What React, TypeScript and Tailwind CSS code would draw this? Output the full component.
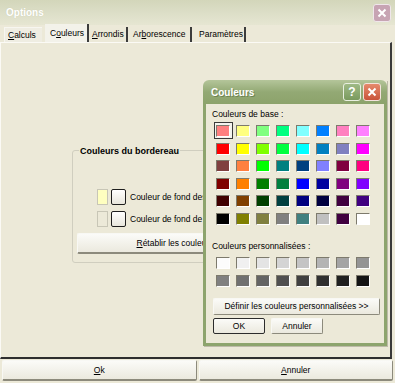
import React from 'react';

const base: string[][] = [
  ['#ff8080', '#ffff80', '#80ff80', '#00ff80', '#80ffff', '#0080ff', '#ff80c0', '#ff80ff'],
  ['#ff0000', '#ffff00', '#80ff00', '#00ff40', '#00ffff', '#0080c0', '#8080c0', '#ff00ff'],
  ['#804040', '#ff8040', '#00ff00', '#008080', '#004080', '#8080ff', '#800040', '#ff0080'],
  ['#800000', '#ff8000', '#008000', '#008040', '#0000ff', '#0000a0', '#800080', '#8000ff'],
  ['#400000', '#804000', '#004000', '#004040', '#000080', '#000040', '#400040', '#400080'],
  ['#000000', '#808000', '#808040', '#808080', '#408080', '#c0c0c0', '#400040', '#ffffff'],
];

const custom: string[] = [
  '#fcfcfc', '#f0f0f0', '#e4e4e4', '#d4d4d4', '#c4c4c4', '#b4b4b4', '#a4a4a4', '#949494',
  '#808080', '#707070', '#646464', '#505050', '#404040', '#303030', '#202020', '#141414',
];

function Swatch({ color, selected }: { color: string; selected?: boolean }) {
  return (
    <div className="relative w-[14px] h-[12px]">
      {selected && (
        <div className="absolute -left-[2px] -top-[3px] w-[19px] h-[17px] border border-[#3a3a3a] bg-[#f4f3ee]" />
      )}
      <div
        className="relative w-[14px] h-[12px] border border-t-[#7d7a6c] border-l-[#7d7a6c] border-b-white border-r-white"
        style={{ backgroundColor: color }}
      />
    </div>
  );
}

function XpButton({ children, className = '', isDefault = false }: { children: React.ReactNode; className?: string; isDefault?: boolean }) {
  return (
    <div
      className={`flex items-center justify-center bg-gradient-to-b from-[#fbfbf8] to-[#ebe9de] border ${
        isDefault
          ? 'border-[#2c2c2c]'
          : 'border-t-[#f8f8f4] border-l-[#f8f8f4] border-b-[#8c8a7c] border-r-[#8c8a7c]'
      } rounded-[2px] ${className}`}
    >
      {children}
    </div>
  );
}

export default function App() {
  return (
    <div className="relative w-[395px] h-[383px] bg-[#ece9d8] flex flex-col overflow-hidden font-['Liberation_Sans',Arial,sans-serif] text-[8.5px] text-black leading-[11px]">
      {/* title bar */}
      <div className="h-[25px] flex items-center justify-between pl-[6px] pr-[4px] bg-gradient-to-b from-[#d3d6ba] via-[#dcdec7] to-[#e6e6d2]">
        <span className="text-white font-bold text-[10px] [text-shadow:0_0_1px_#c4c7a8]">Options</span>
        <div className="w-[18px] h-[18px] rounded-[3px] border border-[#efe6ea] bg-[#c7a4b3] flex items-center justify-center">
          <svg width="10" height="10" viewBox="0 0 10 10">
            <path d="M1.5 1.5 L8.5 8.5 M8.5 1.5 L1.5 8.5" stroke="white" strokeWidth="2" />
          </svg>
        </div>
      </div>

      {/* tabs */}
      <div className="h-[17px] flex items-end pl-[4px]">
        <div className="h-[15px] w-[38px] flex items-center pl-[3px] border-t border-l border-[#f7f6f0] bg-[#efede2]">
          <span><u>C</u>alculs</span>
        </div>
        <div className="h-[18px] w-[44px] ml-[3px] flex items-center pl-[5px] bg-[#f3f2ea] border-r-2 border-r-[#3c3c3c]">
          <span>C<u>o</u>uleurs</span>
        </div>
        <div className="h-[15px] w-[39px] flex items-center pl-[3px] border-r-2 border-r-[#3c3c3c]">
          <span><u>A</u>rrondis</span>
        </div>
        <div className="h-[15px] w-[64px] flex items-center pl-[5px] border-r-2 border-r-[#3c3c3c]">
          <span>Ar<u>b</u>orescence</span>
        </div>
        <div className="h-[15px] w-[54px] flex items-center pl-[7px] border-r-2 border-r-[#3c3c3c]">
          <span>Paramètres</span>
        </div>
      </div>

      {/* tab page */}
      <div className="flex-1 mr-[3px] border-t border-l border-t-[#fbfaf5] border-l-[#fbfaf5] border-r-2 border-r-[#3a3a3a] border-b-2 border-b-[#2e2e2e]">
        <fieldset className="ml-[71px] mt-[102px] w-[209px] border border-[#d0cebf] rounded-[3px] pl-[4px] pb-[8px]">
          <legend className="ml-[2px] px-[1px] font-bold text-[9px] translate-y-[1px]">Couleurs du bordereau</legend>
          <div className="mt-[33px] pl-[20px] flex items-center gap-[3px]">
            <div className="w-[11px] h-[16px] border border-[#c8c6b6] bg-[#ffffc0]" />
            <div className="w-[15px] h-[16px] rounded-[2px] border border-[#1e1e1e] bg-gradient-to-b from-white to-[#e8e6dc]" />
            <span className="ml-[1px]">Couleur de fond des lignes</span>
          </div>
          <div className="mt-[6px] pl-[20px] flex items-center gap-[3px]">
            <div className="w-[11px] h-[16px] border border-[#c8c6b6] bg-[#ece9d8]" />
            <div className="w-[15px] h-[16px] rounded-[2px] border border-[#1e1e1e] bg-gradient-to-b from-white to-[#e8e6dc]" />
            <span className="ml-[1px]">Couleur de fond de la sélection</span>
          </div>
          <XpButton className="mt-[6px] w-[196px] h-[21px] border-b-2 border-b-[#5f5d52]">
            <span><u>R</u>établir les couleurs</span>
          </XpButton>
        </fieldset>
      </div>

      {/* bottom buttons */}
      <div className="h-[24px] flex gap-[2px] px-[2px] pt-[1px] pb-[2px]">
        <XpButton className="flex-1 border-b-2 border-b-[#8a887a]">
          <span><u>O</u>k</span>
        </XpButton>
        <XpButton className="flex-1 border-b-2 border-b-[#8a887a]">
          <span><u>A</u>nnuler</span>
        </XpButton>
      </div>

      {/* color dialog */}
      <div className="absolute left-[203px] top-[80px] w-[184px] h-[266px] flex flex-col shadow-[1px_1px_0_#bdbaa8]">
        <div className="h-[24px] rounded-t-[6px] flex items-center justify-between pl-[8px] pr-[6px] bg-gradient-to-b from-[#b4c59a] via-[#93a974] to-[#8ca36b]">
          <span className="text-white font-bold text-[10px] [text-shadow:1px_1px_0_#6e8452]">Couleurs</span>
          <div className="flex gap-[2px]">
            <div className="w-[18px] h-[18px] rounded-[3px] border border-[#e8efe0] bg-gradient-to-b from-[#9fba86] to-[#7a9a5e] flex items-center justify-center text-white font-bold text-[12px]">
              ?
            </div>
            <div className="w-[18px] h-[18px] rounded-[3px] border border-[#f3e2dc] bg-gradient-to-b from-[#e58a6c] to-[#c9533a] flex items-center justify-center">
              <svg width="10" height="10" viewBox="0 0 10 10">
                <path d="M1.5 1.5 L8.5 8.5 M8.5 1.5 L1.5 8.5" stroke="white" strokeWidth="2" />
              </svg>
            </div>
          </div>
        </div>
        <div className="flex-1 bg-[#ece9d8] border-x-[3px] border-b-[3px] border-[#8da46d] pl-[6px] flex flex-col">
          <div className="mt-[5px]">Couleurs de base :</div>
          <div className="mt-[5px] ml-[4px] grid grid-cols-[repeat(8,14px)] gap-x-[6px] gap-y-[5.5px]">
            {base.flat().map((c, i) => (
              <Swatch key={i} color={c} selected={i === 0} />
            ))}
          </div>
          <div className="mt-[16px]">Couleurs personnalisées :</div>
          <div className="mt-[5.5px] ml-[4px] grid grid-cols-[repeat(8,14px)] gap-x-[6px] gap-y-[6px]">
            {custom.map((c, i) => (
              <Swatch key={i} color={c} />
            ))}
          </div>
          <XpButton className="mt-[11px] ml-[1px] w-[167px] h-[17px]">
            <span>Définir les couleurs personnalisées &gt;&gt;</span>
          </XpButton>
          <div className="mt-[3px] ml-[1px] flex gap-[6px]">
            <XpButton isDefault className="w-[52px] h-[16px]">
              <span>OK</span>
            </XpButton>
            <XpButton className="w-[52px] h-[16px]">
              <span>Annuler</span>
            </XpButton>
          </div>
        </div>
      </div>
    </div>
  );
}
